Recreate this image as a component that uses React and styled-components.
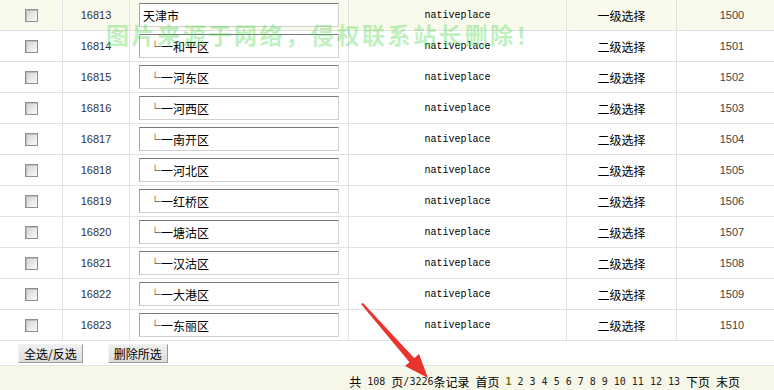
import React from "react";
import styled, { createGlobalStyle } from "styled-components";

const GlobalStyle = createGlobalStyle`
  html, body { margin: 0; padding: 0; background: #fff; overflow: hidden; }
  body { font-family: "Noto Sans CJK SC", sans-serif; font-size: 12px; color: #000; }
`;

const Page = styled.div`
  position: relative;
  width: 774px;
  height: 390px;
  overflow: hidden;
`;

const Table = styled.div`
  width: 788px;
`;

const Row = styled.div`
  display: grid;
  grid-template-columns: 63px 67px 219px 218px 110px 111px;
  height: 31px;
  box-sizing: border-box;
  border-bottom: 1px solid #e1e1e1;
  background: ${(p) => (p.$active ? "#f9f9ec" : "#fff")};
`;

const Cell = styled.div`
  display: flex;
  align-items: center;
  justify-content: ${(p) => (p.$start ? "flex-start" : "center")};
  padding-left: ${(p) => (p.$start ? "9px" : "0")};
  box-sizing: border-box;
  border-right: 1px solid #e1e1e1;
  overflow: hidden;
  white-space: nowrap;
`;

const Check = styled.input.attrs({ type: "checkbox" })`
  appearance: none;
  -webkit-appearance: none;
  margin: 0;
  width: 13px;
  height: 13px;
  box-sizing: border-box;
  border: 1px solid #8f8f8f;
  background: linear-gradient(135deg, #cfcfcf 0%, #e9e9e9 55%, #f8f8f8 100%);
  box-shadow: inset 1px 1px 0 #bdbdbd;
`;

const Num = styled.span`
  font-family: "Liberation Sans", Arial, sans-serif;
  font-size: 11px;
  color: ${(p) => p.$color || "#333"};
`;

const Field = styled.input`
  width: 200px;
  height: 24px;
  box-sizing: border-box;
  margin: 0;
  padding: 0 0 0 3px;
  border-style: solid;
  border-width: 1px;
  border-color: #7a7a7a #d0d0d0 #d0d0d0 #a5a5a5;
  font-family: "Noto Sans CJK SC", sans-serif;
  font-size: 12px;
  color: #000;
  background: #fff;
  outline: none;
`;

const Mono = styled.span`
  font-family: "Liberation Mono", "Courier New", monospace;
  font-size: 10px;
  color: #000;
`;

const Label = styled.span`
  font-family: "Noto Sans CJK SC", sans-serif;
  font-size: 12px;
  color: #000;
`;

const ButtonBar = styled.div`
  display: flex;
  align-items: center;
  gap: 25px;
  height: 25px;
  padding-left: 18px;
  box-sizing: border-box;
  border-bottom: 1px solid #e4e4e4;
`;

const Button = styled.button`
  height: 19px;
  margin: 0;
  padding: 0 5px;
  box-sizing: border-box;
  border-style: solid;
  border-width: 1px;
  border-color: #f2f2f2 #9a9a9a #9a9a9a #f2f2f2;
  background: linear-gradient(#efefef, #dedede);
  font-family: "Noto Sans CJK SC", sans-serif;
  font-size: 12px;
  line-height: 17px;
  color: #000;
`;

const Pager = styled.div`
  display: flex;
  align-items: center;
  justify-content: flex-end;
  gap: 6px;
  height: 30px;
  padding-right: 34px;
  background: #f7f7e9;
`;

const PagerItem = styled.span`
  display: inline-flex;
  align-items: center;
  white-space: nowrap;
`;

const PagerCjk = styled.span`
  font-family: "Noto Sans CJK SC", sans-serif;
  font-size: 12px;
  color: #000;
`;

const PagerNum = styled.span`
  font-family: "DejaVu Sans Mono", monospace;
  font-size: 10px;
  color: ${(p) => (p.$current ? "#6f6f17" : "#222")};
  font-weight: ${(p) => (p.$current ? "bold" : "normal")};
`;

const Watermark = styled.div`
  position: absolute;
  top: 17px;
  left: 106px;
  font-family: "Noto Sans CJK SC", sans-serif;
  font-size: 23px;
  font-weight: 700;
  letter-spacing: 2.6px;
  color: rgba(70, 215, 70, 0.36);
  white-space: nowrap;
  pointer-events: none;
`;

const ArrowSvg = styled.svg`
  position: absolute;
  left: 0;
  top: 0;
  pointer-events: none;
`;

const rows = [
  { id: 16813, name: "天津市", level: "一级选择", order: 1500 },
  { id: 16814, name: "\u2002└一和平区", level: "二级选择", order: 1501 },
  { id: 16815, name: "\u2002└一河东区", level: "二级选择", order: 1502 },
  { id: 16816, name: "\u2002└一河西区", level: "二级选择", order: 1503 },
  { id: 16817, name: "\u2002└一南开区", level: "二级选择", order: 1504 },
  { id: 16818, name: "\u2002└一河北区", level: "二级选择", order: 1505 },
  { id: 16819, name: "\u2002└一红桥区", level: "二级选择", order: 1506 },
  { id: 16820, name: "\u2002└一塘沽区", level: "二级选择", order: 1507 },
  { id: 16821, name: "\u2002└一汉沽区", level: "二级选择", order: 1508 },
  { id: 16822, name: "\u2002└一大港区", level: "二级选择", order: 1509 },
  { id: 16823, name: "\u2002└一东丽区", level: "二级选择", order: 1510 },
];

const pages = Array.from({ length: 13 }, (_, i) => i + 1);

export default function App() {
  return (
    <>
      <GlobalStyle />
      <Page>
        <Table>
          {rows.map((r, i) => (
            <Row key={r.id} $active={i === 0}>
              <Cell>
                <Check />
              </Cell>
              <Cell>
                <Num>{r.id}</Num>
              </Cell>
              <Cell $start>
                <Field defaultValue={r.name} />
              </Cell>
              <Cell>
                <Mono>nativeplace</Mono>
              </Cell>
              <Cell>
                <Label>{r.level}</Label>
              </Cell>
              <Cell>
                <Num $color="#444">{r.order}</Num>
              </Cell>
            </Row>
          ))}
        </Table>
        <ButtonBar>
          <Button>全选/反选</Button>
          <Button>删除所选</Button>
        </ButtonBar>
        <Pager>
          <PagerItem>
            <PagerCjk>共</PagerCjk>
          </PagerItem>
          <PagerItem>
            <PagerNum>108</PagerNum>
          </PagerItem>
          <PagerItem>
            <PagerCjk>页</PagerCjk>
            <PagerNum>/3226</PagerNum>
            <PagerCjk>条记录</PagerCjk>
          </PagerItem>
          <PagerItem>
            <PagerCjk>首页</PagerCjk>
          </PagerItem>
          {pages.map((p) => (
            <PagerItem key={p}>
              <PagerNum $current={p === 1}>{p}</PagerNum>
            </PagerItem>
          ))}
          <PagerItem>
            <PagerCjk>下页</PagerCjk>
          </PagerItem>
          <PagerItem>
            <PagerCjk>末页</PagerCjk>
          </PagerItem>
        </Pager>
        <Watermark>图片来源于网络，侵权联系站长删除！</Watermark>
        <ArrowSvg width="774" height="390" viewBox="0 0 774 390">
          <polygon points="361,304 363,303 416,360 411,364" fill="#e8342c" />
          <polygon points="428,378 405,366 419,354" fill="#e8342c" />
        </ArrowSvg>
      </Page>
    </>
  );
}
